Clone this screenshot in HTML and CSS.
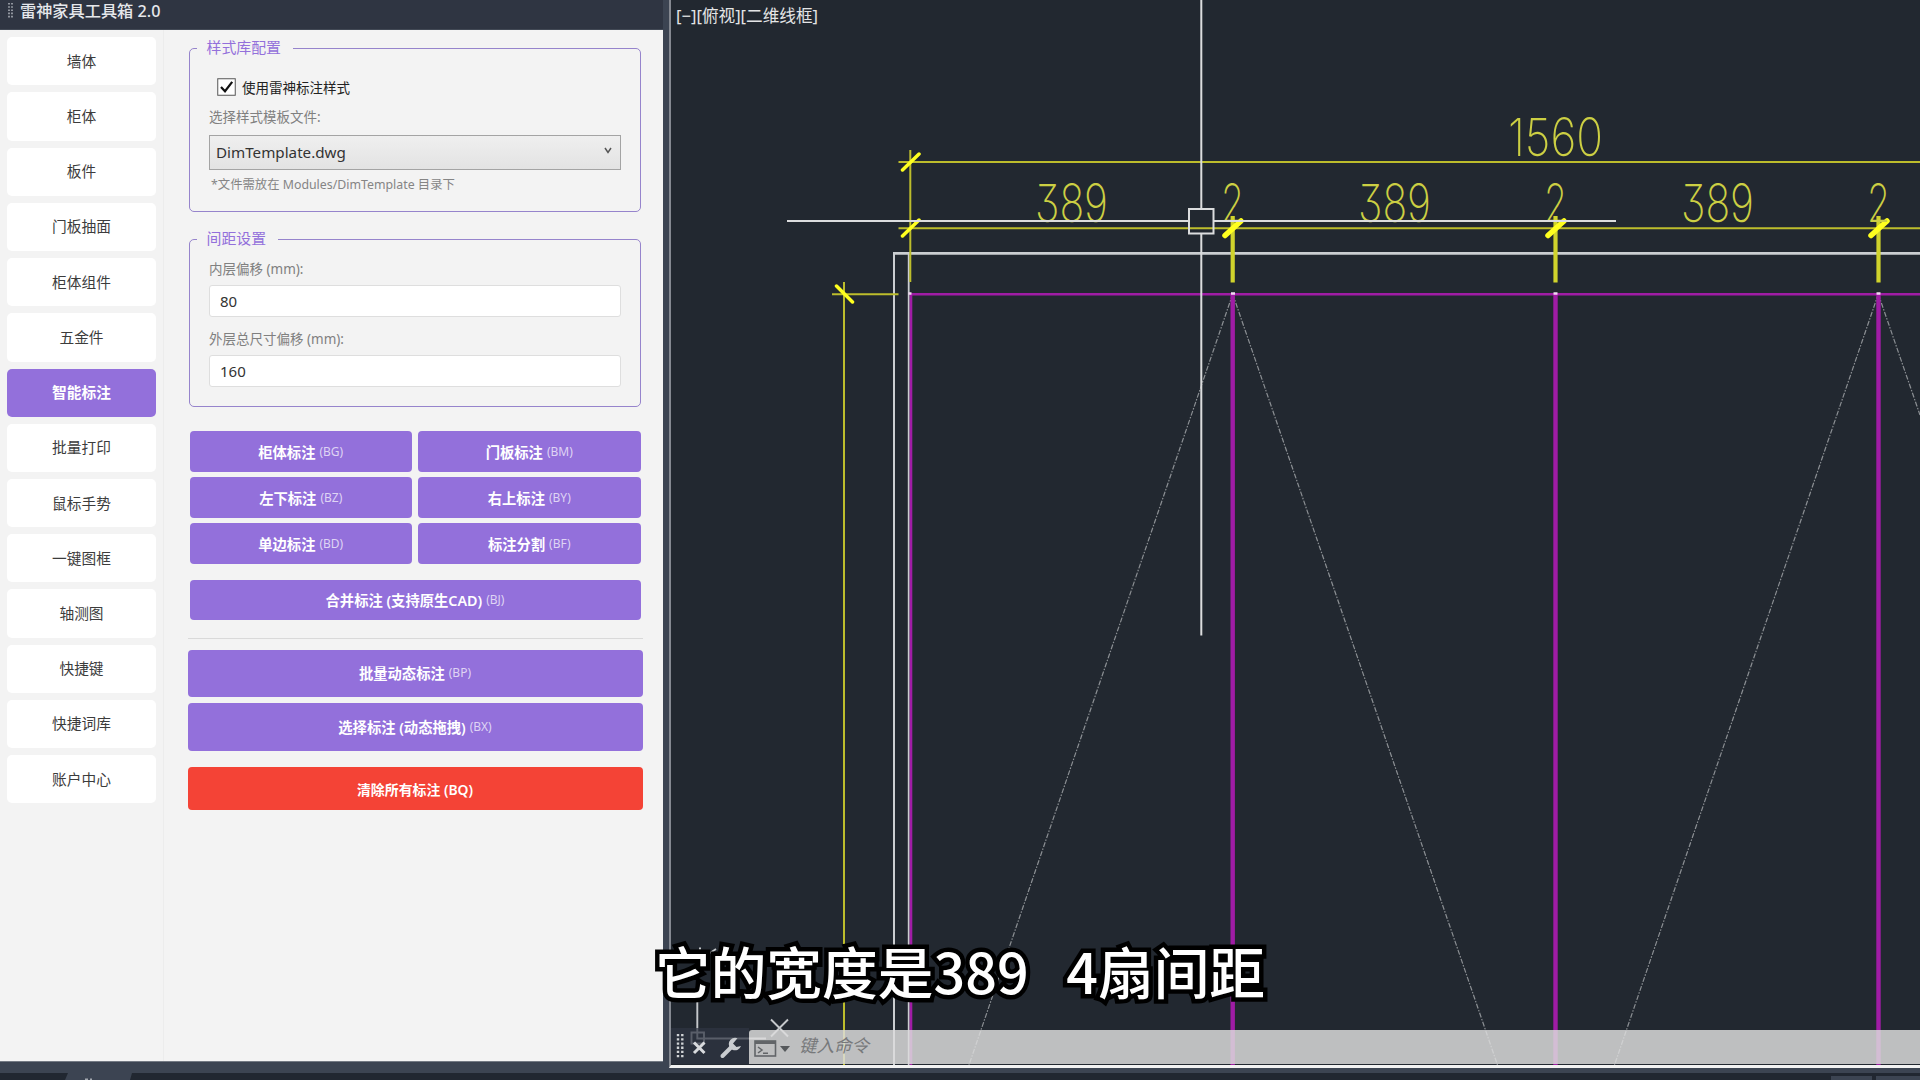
FILE: index.html
```
<!DOCTYPE html>
<html lang="zh-CN">
<head>
<meta charset="utf-8">
<title>雷神家具工具箱 2.0</title>
<link rel="stylesheet" href="styles.css">
</head>
<body>
<div class="app">
  <div class="workspace">
    <section class="palette">
      <header class="titlebar">
        <svg class="grip" width="5" height="16" viewBox="0 0 5 16"><path d="M1 0V16M4 0V16" stroke="#a9adb5" stroke-width="1.6" stroke-dasharray="1.6 1.6"/></svg>
        <span>雷神家具工具箱 2.0</span>
      </header>
      <div class="palette-body">
        <nav class="sidebar">
          <a class="tab">墙体</a>
          <a class="tab">柜体</a>
          <a class="tab">板件</a>
          <a class="tab">门板抽面</a>
          <a class="tab">柜体组件</a>
          <a class="tab">五金件</a>
          <a class="tab active">智能标注</a>
          <a class="tab">批量打印</a>
          <a class="tab">鼠标手势</a>
          <a class="tab">一键图框</a>
          <a class="tab">轴测图</a>
          <a class="tab">快捷键</a>
          <a class="tab">快捷词库</a>
          <a class="tab">账户中心</a>
        </nav>
        <main class="content">
          <section class="group group-style">
            <h2 class="legend">样式库配置</h2>
            <div class="check-row">
              <svg width="19" height="18" viewBox="0 0 19 18"><rect x=".75" y=".75" width="17.5" height="16.5" fill="#fff" stroke="#555"/><path d="M4 9L8 13.2L15.2 3.8" fill="none" stroke="#111" stroke-width="2.2"/></svg>
              <span>使用雷神标注样式</span>
            </div>
            <div class="label">选择样式模板文件:</div>
            <div class="combo"><span>DimTemplate.dwg</span><svg width="8" height="7" viewBox="0 0 8 7"><path d="M1 1L4 5.4L7 1" fill="none" stroke="#555" stroke-width="1.5"/></svg></div>
            <div class="note">*文件需放在 Modules/DimTemplate 目录下</div>
          </section>
          <section class="group group-gap">
            <h2 class="legend">间距设置</h2>
            <div class="label">内层偏移 (mm):</div>
            <div class="field">80</div>
            <div class="label">外层总尺寸偏移 (mm):</div>
            <div class="field">160</div>
          </section>
          <div class="button-grid">
            <div class="btn">柜体标注<small>(BG)</small></div>
            <div class="btn">门板标注<small>(BM)</small></div>
            <div class="btn">左下标注<small>(BZ)</small></div>
            <div class="btn">右上标注<small>(BY)</small></div>
            <div class="btn">单边标注<small>(BD)</small></div>
            <div class="btn">标注分割<small>(BF)</small></div>
          </div>
          <div class="btn merge">合并标注 (支持原生CAD)<small>(BJ)</small></div>
          <hr class="rule">
          <div class="btn wide">批量动态标注<small>(BP)</small></div>
          <div class="btn wide">选择标注 (动态拖拽)<small>(BX)</small></div>
          <div class="btn danger">清除所有标注 (BQ)</div>
        </main>
      </div>
    </section>
    <section class="viewport">
      <svg class="drawing" width="1249" height="1065" viewBox="671 0 1249 1065">
        <text class="view-label" x="676" y="22" textLength="142" lengthAdjust="spacingAndGlyphs">[−][俯视][二维线框]</text>

        <g class="outline">
          <path d="M894 1065V253.4" stroke-width="2"/>
          <path d="M893 253.4H1920" stroke-width="2.8" stroke="#a2a6aa"/>
          <path d="M908.7 254V1065" stroke-width="1.8"/>
        </g>
        <g class="swing">
          <path d="M1232.7 294L969 1065M1232.7 294L1497.500 1065M1878.300 294L1614.500 1065M1878.300 294L1920 415"/>
        </g>
        <g class="panels">
          <path d="M910 294.200H1920" stroke-width="2.600" stroke="#832489"/>
          <path d="M911 294V1065" stroke-width="2.600"/>
          <path d="M1232.700 294V1065M1555.500 294V1065M1878.500 294V1065" stroke-width="4.400"/>
        </g>
        <g class="nodes">
          <path d="M1231 293.500h4M1553.500 293.500h4M1876.500 293.500h4M908.500 293.500h3"/>
        </g>

        <g class="dims">
          <path d="M898.500 162H1920M898.500 228.200H1920M910.300 150V282M844 282V1065M832 294.200H898.500"/>
          <path class="post" d="M1232.700 216V282.500M1555.500 216V282.500M1878.500 216V282.500"/>
          <path class="tick" d="M902.500 170L919 154M902.500 236L919 220M836.500 286L852.500 302"/>
          <path class="tick bold" d="M1225 235.500L1241 221M1548 235.500L1564 221M1871 235.500L1887 221"/>
        </g>
        <g class="dim-text">
          <text x="1508" y="156" textLength="95" lengthAdjust="spacingAndGlyphs">1560</text>
          <text x="1035" y="222" textLength="73" lengthAdjust="spacingAndGlyphs">389</text>
          <text x="1358" y="222" textLength="73" lengthAdjust="spacingAndGlyphs">389</text>
          <text x="1681" y="222" textLength="73" lengthAdjust="spacingAndGlyphs">389</text>
          <text x="1221" y="222" textLength="23" lengthAdjust="spacingAndGlyphs">2</text>
          <text x="1544" y="222" textLength="23" lengthAdjust="spacingAndGlyphs">2</text>
          <text x="1867" y="222" textLength="23" lengthAdjust="spacingAndGlyphs">2</text>
        </g>

        <g class="crosshair">
          <path d="M1201.300 0V208.500M1201.300 233.500V635.500M787 221H1188.500M1214 221H1616"/>
          <rect x="1189" y="209" width="24.500" height="24.500"/>
        </g>
        <g class="ucs">
          <path d="M697.300 975V1038.500H766M691.500 1032.500h12.500v11h-12.500zM771 1019.500L788 1036.500M788 1019.500L771 1036.500M699 948.500h2M710 953L716 949"/>
        </g>
      </svg>
      <div class="command-bar">
        <div class="command-tools">
          <svg width="78" height="37" viewBox="671 1028 78 37">
            <path d="M678 1034V1058M682.300 1034V1058" stroke="#d0d3d6" stroke-width="2.400" stroke-dasharray="2.300 1.900"/>
            <path d="M694 1042.500L704.500 1053M704.500 1042.500L694 1053" stroke="#d8dadd" stroke-width="3"/>
            <path d="M722.500 1056L732 1046.500" stroke="#c9ccd0" stroke-width="4" stroke-linecap="round"/>
            <path d="M737.500 1038.200a6.300 6.300 0 1 0 3.500 7.800l-4.500 1-3.500-3.500z" fill="#c9ccd0"/>
          </svg>
        </div>
        <div class="command-input">
          <svg width="37" height="18" viewBox="0 0 37 18"><rect x="1" y="1" width="20.500" height="15" fill="none" stroke="#626568" stroke-width="1.600"/><path d="M1 2.500H21" stroke="#626568" stroke-width="3"/><path d="M4 7L8 10L4 13M9 13.300H14" fill="none" stroke="#626568" stroke-width="1.500"/><path d="M26 6H36L31 12Z" fill="#55585b"/></svg>
          <span>键入命令</span>
        </div>
      </div>
    </section>
  </div>
  <footer class="statusbar">
    <svg width="132" height="7" viewBox="0 0 132 7"><path d="M65 7L68 0H132L130 7Z" fill="#3c4452"/><path d="M85 6.300h3M90 6.300h2" stroke="#a3a8af" stroke-width="1.500"/></svg>
    <div class="status-items"><i></i><i></i></div>
  </footer>
  <div class="subtitle">它的宽度是389   4扇间距</div>
</div>
</body>
</html>
```
FILE: styles.css
```
* { box-sizing: border-box; }

body {
  margin: 0;
  background: #3c4452;
  font-family: "Noto Sans", "Noto Sans CJK SC", sans-serif;
}

.app {
  position: relative;
  display: flex;
  flex-direction: column;
  width: 1920px;
  height: 1080px;
  overflow: hidden;
}

.workspace {
  display: flex;
  height: 1073px;
  gap: 5.500px;
}

/* Tool palette */
.palette {
  display: flex;
  flex-direction: column;
  width: 663px;
  height: 1062px;
  background: #f3f3f3;
  border-bottom: 1px solid #747a84;
}

.titlebar {
  display: flex;
  align-items: center;
  gap: 7px;
  height: 30px;
  padding: 0 8px 7px;
  background: #2f3542;
  border-bottom: 1px solid #424955;
  color: #e6e8ec;
  font-size: 16.200px;
  font-weight: 500;
  line-height: 22px;
  white-space: nowrap;
}

.palette-body {
  display: flex;
  flex: 1;
}

.sidebar {
  display: flex;
  flex-direction: column;
  gap: 6.930px;
  width: 164px;
  padding: 7.200px 7px;
  border-right: 1px solid #ececec;
}

.tab {
  display: flex;
  align-items: center;
  justify-content: center;
  height: 48.300px;
  padding-bottom: 2px;
  border-radius: 5px;
  background: #fff;
  color: #3c3c3c;
  font-size: 14.700px;
}

.tab.active {
  background: #9370db;
  color: #fff;
  font-weight: 600;
}

.content {
  display: flex;
  flex-direction: column;
  width: 499px;
  padding: 18px 20.500px 0 23.500px;
}

.group {
  position: relative;
  display: flex;
  flex-direction: column;
  margin: 0 1.500px;
  padding: 0 19px;
  border: 1px solid #9684cc;
  border-radius: 5px;
}

.group-style { height: 163.500px; padding-top: 28px; }
.group-gap { height: 168px; margin-top: 27.500px; padding-top: 19px; }

.legend {
  position: absolute;
  top: -13px;
  left: 6.500px;
  margin: 0;
  padding: 0 12px 0 10px;
  background: #f3f3f3;
  color: #9370db;
  font-size: 14.900px;
  font-weight: 400;
  line-height: 22px;
}

.check-row {
  display: flex;
  align-items: center;
  gap: 6px;
  height: 20px;
  padding-left: 8px;
  color: #222;
  font-size: 13.500px;
}

.check-row span { margin-top: -1px; }

.label {
  height: 20px;
  color: #808080;
  font-size: 13.500px;
  line-height: 20px;
}

.group-style .label { margin-top: 9.500px; }

.combo {
  display: flex;
  align-items: center;
  justify-content: space-between;
  height: 34.500px;
  margin-top: 8.500px;
  padding: 0 8px 0 6px;
  border: 1px solid #a4a4a4;
  background: linear-gradient(#efefef, #e3e3e3);
  color: #333;
  font-size: 15.200px;
}

.combo svg { margin-bottom: 4px; }

.note {
  margin-top: 5px;
  padding-left: 2px;
  color: #858585;
  font-size: 12.350px;
  line-height: 20px;
}

.field {
  height: 32px;
  margin: 5.500px 0 12.500px;
  padding-left: 10px;
  border: 1px solid #dedede;
  border-radius: 3px;
  background: #fff;
  color: #333;
  font-size: 15px;
  line-height: 30px;
}

.button-grid {
  display: grid;
  grid-template-columns: 1fr 1fr;
  gap: 5.500px 6px;
  margin: 24px 2px 0;
}

.btn {
  display: flex;
  align-items: center;
  justify-content: center;
  gap: 4px;
  height: 40.500px;
  border-radius: 4px;
  background: #9370db;
  color: #fff;
  font-size: 14.300px;
  font-weight: 600;
  white-space: nowrap;
}

.btn small {
  color: #dfd4f4;
  font-size: 12px;
  font-weight: 400;
}

.merge { margin: 16px 2px 0; }

.rule {
  width: 100%;
  height: 1px;
  margin: 17.500px 0 11px;
  border: 0;
  background: #d9d9d9;
}

.wide { height: 47.200px; margin-bottom: 6.800px; padding-bottom: 2px; }

.danger {
  height: 43px;
  margin-top: 10px;
  background: #f44336;
  font-size: 13.900px;
}

/* Drawing viewport */
.viewport {
  position: relative;
  width: 1251.500px;
  height: 1068px;
  border-left: 2.500px solid #858991;
  border-bottom: 3px solid #f2f2f2;
  background: #222830;
}

.drawing { display: block; }

.view-label { fill: #e4e5e6; font-size: 17px; }

.outline path { fill: none; stroke: #cbced1; }
.swing path { fill: none; stroke: #8c9094; stroke-width: 1.200; stroke-dasharray: 5 1.500 1.500 1.500; }
.panels path { fill: none; stroke: #a01ca5; }
.nodes path { stroke: #f4d9f5; stroke-width: 2.500; }
.dims path { fill: none; stroke: #bdbd2c; stroke-width: 2; }
.dims .post { stroke: #d0d32c; stroke-width: 4.200; }
.dims .tick { stroke: #ffff1f; stroke-width: 3.500; stroke-linecap: round; }
.dims .bold { stroke-width: 5.500; }
.dim-text {
  fill: #cccf43;
  font-family: Inter, sans-serif;
  font-size: 52.500px;
  font-weight: 200;
  font-feature-settings: "cv09";
}
.crosshair path, .crosshair rect { fill: none; stroke: #dcddde; stroke-width: 2; }
.ucs path { fill: none; stroke: #c5c8cb; stroke-width: 1.900; }

.command-bar {
  position: absolute;
  left: 0;
  right: 0;
  bottom: 1px;
  display: flex;
  align-items: flex-end;
  height: 36px;
}

.command-tools {
  width: 78px;
  height: 36px;
  background: rgba(47, 53, 66, .72);
}

.command-tools svg { display: block; }

.command-input {
  display: flex;
  flex: 1;
  gap: 8.500px;
  height: 34px;
  padding: 9.500px 5px 0;
  border-radius: 3px 0 0 0;
  background: rgba(220, 221, 221, .84);
  color: #77797b;
  font-size: 17.500px;
  font-style: italic;
  line-height: 11px;
}

/* Lower window edge */
.statusbar {
  display: flex;
  justify-content: space-between;
  height: 7px;
  background: #212731;
}

.status-items { display: flex; gap: 4px; padding-top: 3px; }
.status-items i { width: 41px; height: 4px; background: #3c4452; }
.status-items i + i { width: 44px; }

.subtitle {
  position: absolute;
  left: 655px;
  top: 928.500px;
  color: #fff;
  font-family: "Noto Sans CJK SC", sans-serif;
  font-size: 55.700px;
  font-weight: 500;
  line-height: 82px;
  white-space: pre;
  -webkit-text-stroke: 9px #000;
  paint-order: stroke fill;
  stroke-linejoin: round;
}
```
